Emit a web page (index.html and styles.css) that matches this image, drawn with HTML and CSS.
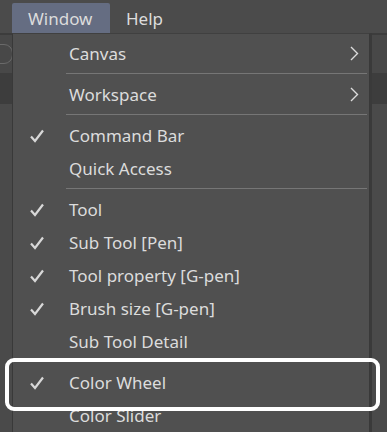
FILE: index.html
```html
<!DOCTYPE html>
<html lang="en">

<head>
    <meta charset="UTF-8">
    <meta name="viewport" content="width=device-width, initial-scale=1.0">
    <title>Window menu</title>
    <link rel="stylesheet" href="styles.css">
</head>

<body>
    <div class="app">
        <div class="menubar">
            <div class="menubar-item active">Window</div>
            <div class="menubar-item">Help</div>
        </div>
        <div class="toolbar">
            <div class="tool-pill"></div>
        </div>
        <div class="panel-head"></div>
        <div class="workspace"></div>
    </div>

    <div class="menu">
        <div class="item">
            <span class="check"></span>
            <span class="label">Canvas</span>
            <svg class="arrow" width="9" height="15" viewBox="0 0 9 15"><path d="M1 1 L7.5 7.5 L1 14" fill="none" stroke="#dcdcdc" stroke-width="1.4"/></svg>
        </div>
        <div class="sep"></div>
        <div class="item">
            <span class="check"></span>
            <span class="label">Workspace</span>
            <svg class="arrow" width="9" height="15" viewBox="0 0 9 15"><path d="M1 1 L7.5 7.5 L1 14" fill="none" stroke="#dcdcdc" stroke-width="1.4"/></svg>
        </div>
        <div class="sep"></div>
        <div class="item">
            <span class="check"><svg width="14" height="14" viewBox="0 0 14 14"><path d="M1 7.5 L5 12 L13 1.5" fill="none" stroke="#d8d8d8" stroke-width="2.2"/></svg></span>
            <span class="label">Command Bar</span>
        </div>
        <div class="item">
            <span class="check"></span>
            <span class="label">Quick Access</span>
        </div>
        <div class="sep"></div>
        <div class="item">
            <span class="check"><svg width="14" height="14" viewBox="0 0 14 14"><path d="M1 7.5 L5 12 L13 1.5" fill="none" stroke="#d8d8d8" stroke-width="2.2"/></svg></span>
            <span class="label">Tool</span>
        </div>
        <div class="item">
            <span class="check"><svg width="14" height="14" viewBox="0 0 14 14"><path d="M1 7.5 L5 12 L13 1.5" fill="none" stroke="#d8d8d8" stroke-width="2.2"/></svg></span>
            <span class="label">Sub Tool [Pen]</span>
        </div>
        <div class="item">
            <span class="check"><svg width="14" height="14" viewBox="0 0 14 14"><path d="M1 7.5 L5 12 L13 1.5" fill="none" stroke="#d8d8d8" stroke-width="2.2"/></svg></span>
            <span class="label">Tool property [G-pen]</span>
        </div>
        <div class="item">
            <span class="check"><svg width="14" height="14" viewBox="0 0 14 14"><path d="M1 7.5 L5 12 L13 1.5" fill="none" stroke="#d8d8d8" stroke-width="2.2"/></svg></span>
            <span class="label">Brush size [G-pen]</span>
        </div>
        <div class="item">
            <span class="check"></span>
            <span class="label">Sub Tool Detail</span>
        </div>
        <div class="sep"></div>
        <div class="item">
            <span class="check"><svg width="14" height="14" viewBox="0 0 14 14"><path d="M1 7.5 L5 12 L13 1.5" fill="none" stroke="#d8d8d8" stroke-width="2.2"/></svg></span>
            <span class="label">Color Wheel</span>
        </div>
        <div class="item">
            <span class="check"></span>
            <span class="label">Color Slider</span>
        </div>
    </div>

    <div class="focus-ring"></div>
</body>

</html>
```

FILE: styles.css
```css
html, body {
    margin: 0;
    height: 100%;
    overflow: hidden;
}

body {
    background-color: #474747;
    font-family: "Noto Sans", "Open Sans", sans-serif;
    color: #dcdcdc;
}

.app {
    display: flex;
    flex-direction: column;
    height: 100%;
}

.menubar {
    display: flex;
    align-items: flex-end;
    height: 35px;
    padding-left: 12px;
    background-color: #4b4b4b;
    border-bottom: 2px solid #3c3c3c;
    box-sizing: border-box;
}

.menubar-item {
    height: 30px;
    line-height: 32px;
    padding: 0 17px 0 16px;
    font-size: 17px;
    border-radius: 2px 2px 0 0;
}

.menubar-item.active {
    width: 98px;
    box-sizing: border-box;
    background-color: #656d82;
}

.toolbar {
    display: flex;
    align-items: center;
    height: 38px;
    background-color: #484848;
}

.tool-pill {
    width: 26px;
    height: 18px;
    margin-left: -15px;
    border: 1px solid #6a6a6a;
    border-radius: 9px;
}

.panel-head {
    height: 31px;
    background-color: #3d3d3d;
}

.workspace {
    flex: 1;
    background-color: #4a4a4a;
}

.menu {
    position: absolute;
    top: 33px;
    left: 12px;
    width: 358px;
    padding-top: 3px;
    box-sizing: border-box;
    background-color: #505050;
    border-left: 1px solid #393939;
    border-right: 1px solid #393939;
    border-top: 1px solid #404040;
    box-shadow: 2px 0 0 #3a3a3a;
}

.item {
    display: flex;
    align-items: center;
    height: 33px;
    font-size: 17px;
}

.check {
    display: flex;
    width: 56px;
    padding-left: 17px;
    box-sizing: border-box;
}

.label {
    flex: 1;
}

.arrow {
    margin-right: 10px;
}

.sep {
    height: 1px;
    margin: 3px 2px 4px 53px;
    background-color: #767676;
}

.focus-ring {
    position: absolute;
    top: 358px;
    left: 5px;
    width: 375px;
    height: 53px;
    box-sizing: border-box;
    border: 4px solid #ffffff;
    border-radius: 9px;
}
```
